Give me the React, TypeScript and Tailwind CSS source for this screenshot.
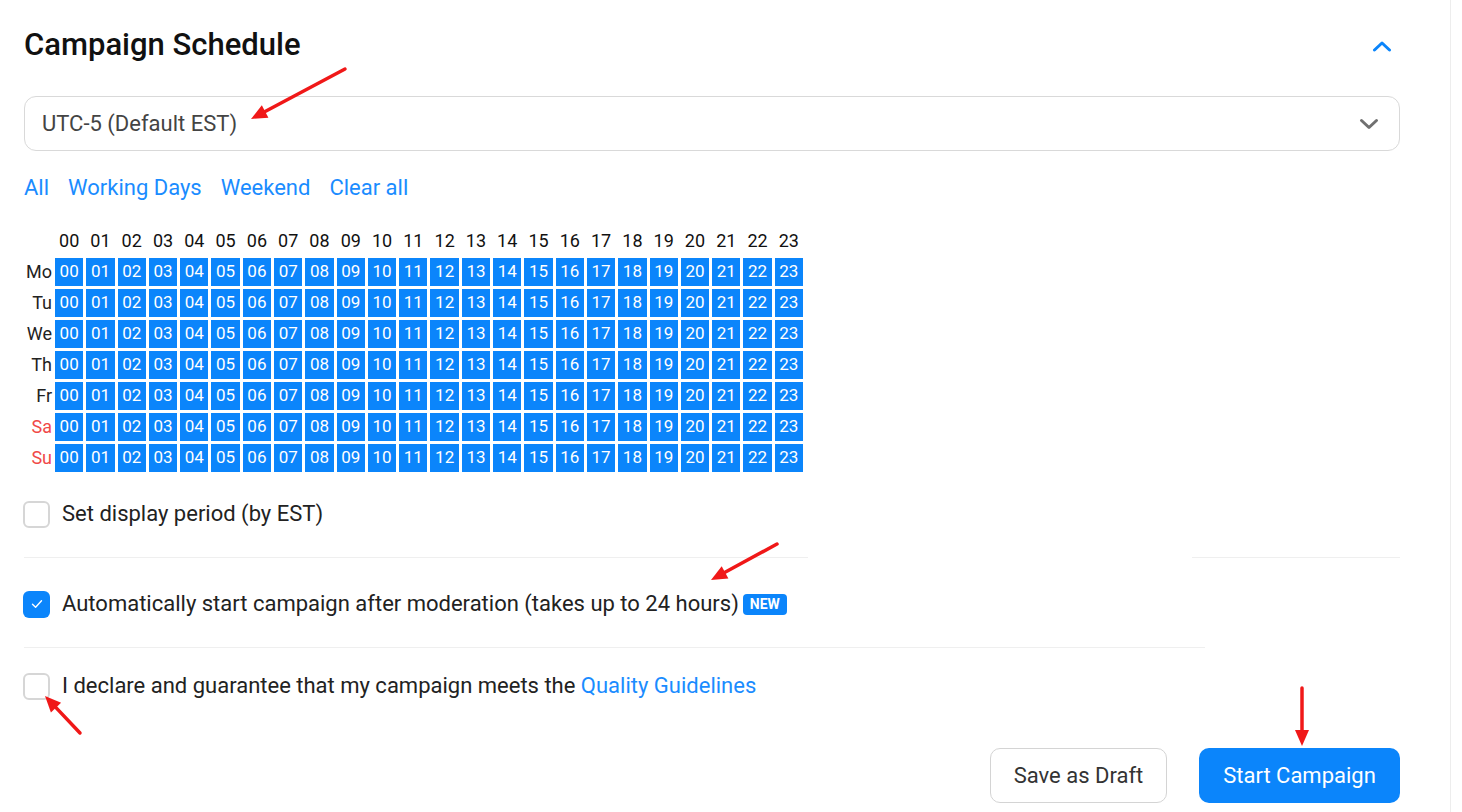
import React from 'react';

const hours = Array.from({ length: 24 }, (_, i) => String(i).padStart(2, '0'));
const days = [
  { label: 'Mo', weekend: false },
  { label: 'Tu', weekend: false },
  { label: 'We', weekend: false },
  { label: 'Th', weekend: false },
  { label: 'Fr', weekend: false },
  { label: 'Sa', weekend: true },
  { label: 'Su', weekend: true },
];

// Red annotation arrow drawn over the page
function Arrow({ x1, y1, x2, y2 }: { x1: number; y1: number; x2: number; y2: number }) {
  const ang = Math.atan2(y2 - y1, x2 - x1);
  const len = 16;
  const w = 7;
  const bx = x2 - len * Math.cos(ang);
  const by = y2 - len * Math.sin(ang);
  const px = -Math.sin(ang) * w;
  const py = Math.cos(ang) * w;
  return (
    <g>
      <line x1={x1} y1={y1} x2={bx} y2={by} stroke="#f01818" strokeWidth="3.5" strokeLinecap="round" />
      <polygon points={`${x2},${y2} ${bx + px},${by + py} ${bx - px},${by - py}`} fill="#f01818" />
    </g>
  );
}

function Checkbox({ checked }: { checked?: boolean }) {
  if (checked) {
    return (
      <span className="-ml-px flex h-[27px] w-[27px] shrink-0 items-center justify-center rounded-[6px] bg-[#0b85fb]">
        <svg width="12" height="10" viewBox="0 0 12 10" fill="none">
          <path d="M1.5 5.2 L4.6 8.2 L10.5 1.8" stroke="white" strokeWidth="1.4" strokeLinecap="round" strokeLinejoin="round" />
        </svg>
      </span>
    );
  }
  return <span className="-ml-px block h-[27px] w-[27px] shrink-0 rounded-[6px] border-2 border-[#d6d6d6] bg-white" />;
}

export default function App() {
  return (
    <div className="relative h-[812px] w-[1462px] overflow-hidden bg-white font-['Roboto',sans-serif] text-[#222]">
      <div className="h-full w-[1451px] border-r border-[#ededed] pl-[24px] pr-[50px]">
        {/* Header */}
        <div className="flex h-[90px] items-start justify-between pt-[26px]">
          <h2 className="text-[31px] font-medium leading-[38px] text-[#111]">Campaign Schedule</h2>
          <svg className="mr-[8px] mt-[14px]" width="20" height="12" viewBox="0 0 20 12" fill="none">
            <path d="M2.5 10 L10 3 L17.5 10" stroke="#0b85fb" strokeWidth="3" strokeLinecap="round" strokeLinejoin="round" />
          </svg>
        </div>

        {/* Timezone select */}
        <div className="mt-[6px] flex h-[55px] items-center justify-between rounded-[12px] border border-[#d9d9d9] pl-[17px] pr-[20px]">
          <span className="text-[22px] text-[#444]">UTC-5 (Default EST)</span>
          <svg width="20" height="12" viewBox="0 0 20 12" fill="none">
            <path d="M2.5 2.5 L10 9.5 L17.5 2.5" stroke="#707070" strokeWidth="3" strokeLinecap="round" strokeLinejoin="round" />
          </svg>
        </div>

        {/* Quick selectors */}
        <div className="mt-[24px] flex gap-[19px] text-[22px] leading-[26px] text-[#1a8cff]">
          <span>All</span>
          <span>Working Days</span>
          <span>Weekend</span>
          <span>Clear all</span>
        </div>

        {/* Hour grid */}
        <div className="mt-[28px] flex flex-col">
          <div className="flex h-[24px] items-center">
            <div className="w-[31px] shrink-0" />
            <div className="grid w-[748px] grid-cols-[repeat(24,minmax(0,1fr))] gap-x-[3px] text-center text-[18px] leading-[24px] text-[#111]">
              {hours.map((h) => (
                <span key={h}>{h}</span>
              ))}
            </div>
          </div>
          <div className="mt-[5px] flex flex-col gap-[3px]">
            {days.map((d) => (
              <div key={d.label} className="flex h-[28px] items-center">
                <div className={`w-[31px] shrink-0 pr-[3px] text-right text-[18px] leading-[28px] ${d.weekend ? 'text-[#f04848]' : 'text-[#222]'}`}>
                  {d.label}
                </div>
                <div className="grid h-full w-[748px] grid-cols-[repeat(24,minmax(0,1fr))] gap-x-[3px]">
                  {hours.map((h) => (
                    <span key={h} className="flex items-center justify-center bg-[#0b85fb] text-[17px] text-white">
                      {h}
                    </span>
                  ))}
                </div>
              </div>
            ))}
          </div>
        </div>

        {/* Display period */}
        <div className="mt-[28px] flex h-[28px] items-center gap-[12px]">
          <Checkbox />
          <span className="text-[22px] leading-[28px]">Set display period (by EST)</span>
        </div>

        <div className="mt-[29px] h-px w-[1376px] bg-[#efefef]" />

        {/* Auto start */}
        <div className="mt-[32px] flex h-[28px] items-center gap-[12px]">
          <Checkbox checked />
          <span className="text-[22px] leading-[28px]">Automatically start campaign after moderation (takes up to 24 hours)</span>
          <span className="-ml-[8px] rounded-[4px] bg-[#0b85fb] px-[7px] py-[2px] text-[14px] font-bold leading-[17px] text-white">NEW</span>
        </div>

        <div className="mt-[29px] h-px w-[1181px] bg-[#efefef]" />

        {/* Declaration */}
        <div className="mt-[24px] flex h-[28px] items-center gap-[12px]">
          <Checkbox />
          <span className="text-[22px] leading-[28px]">
            I declare and guarantee that my campaign meets the <span className="text-[#1a8cff]">Quality Guidelines</span>
          </span>
        </div>

        {/* Actions */}
        <div className="mt-[48px] flex w-[1376px] justify-end gap-[32px]">
          <button className="h-[55px] w-[177px] rounded-[10px] border border-[#d4d4d4] bg-white text-[22px] text-[#333]">
            Save as Draft
          </button>
          <button className="h-[55px] w-[201px] rounded-[10px] bg-[#0b85fb] text-[22px] text-white">
            Start Campaign
          </button>
        </div>
      </div>

      {/* redacted strip over the first divider */}
      <div className="absolute left-[808px] top-[545px] h-[15px] w-[384px] bg-white" />

      {/* annotation arrows */}
      <svg className="pointer-events-none absolute left-0 top-0" width="1462" height="812">
        <Arrow x1={345} y1={69} x2={251} y2={119} />
        <Arrow x1={777} y1={544} x2={711} y2={580} />
        <Arrow x1={80} y1={733} x2={45} y2={696} />
        <Arrow x1={1302} y1={688} x2={1302} y2={746} />
      </svg>
    </div>
  );
}
